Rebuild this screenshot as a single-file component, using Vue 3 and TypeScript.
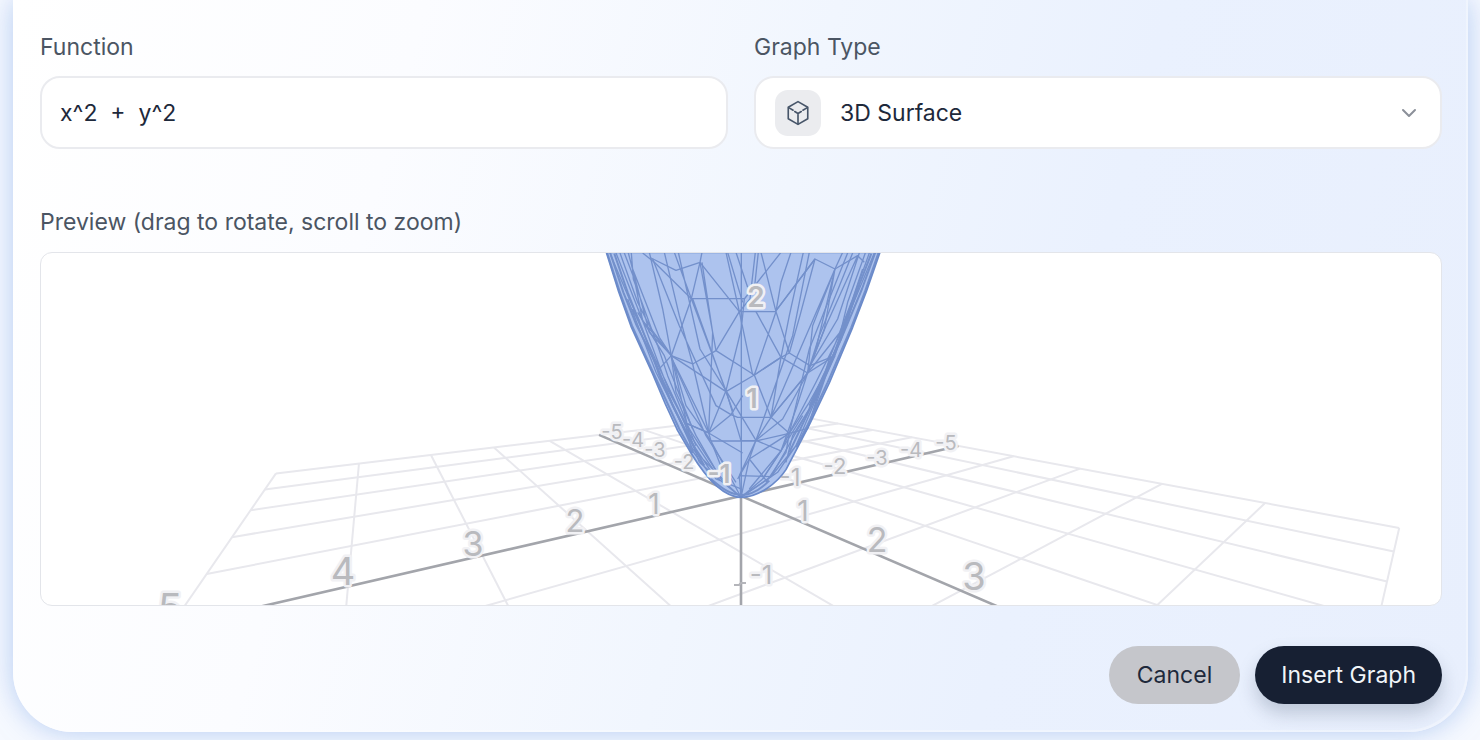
<script setup lang="ts">
import { computed, ref } from 'vue'

interface Mark {
  text: string
  x: number
  y: number
  size: number
}

interface Segment {
  x1: number
  y1: number
  x2: number
  y2: number
}

const expression = ref('x^2  +  y^2')
const graphType = ref('surface')

// Perspective projection of the ground plane, relative to the origin of the axes.
function project(u: number, v: number): [number, number] {
  const w = 1 - 0.0897 * u - 0.1241 * v
  return [(-63 * u + 46 * v) / w, (14.5 * u + 19.8 * v) / w]
}

function segment(u1: number, v1: number, u2: number, v2: number): Segment {
  const [x1, y1] = project(u1, v1)
  const [x2, y2] = project(u2, v2)
  return { x1, y1, x2, y2 }
}

const gridLines = computed<Segment[]>(() => {
  const lines: Segment[] = []
  for (let i = -5; i <= 5; i++) {
    if (i === 0) continue
    lines.push(segment(i, -5, i, i > 0 ? 4 : 5))
    lines.push(segment(-5, i, i > 0 ? 4 : 5, i))
  }
  return lines
})

const axes: Segment[] = [segment(-5, 0, 5, 0), segment(0, -5, 0, 4)]

const marks: Mark[] = [
  { text: '5', x: -571, y: 126, size: 40 },
  { text: '4', x: -398, y: 89, size: 38 },
  { text: '3', x: -268, y: 60, size: 34 },
  { text: '2', x: -166, y: 36, size: 31 },
  { text: '1', x: -87, y: 18, size: 28 },
  { text: '-5', x: -129, y: -57, size: 20 },
  { text: '-4', x: -108, y: -49, size: 20 },
  { text: '-3', x: -86, y: -39, size: 20 },
  { text: '-2', x: -57, y: -27, size: 20 },
  { text: '-1', x: 49, y: -10, size: 24 },
  { text: '-2', x: 94, y: -22, size: 22 },
  { text: '-3', x: 136, y: -31, size: 20 },
  { text: '-4', x: 170, y: -39, size: 20 },
  { text: '-5', x: 205, y: -46, size: 20 },
  { text: '1', x: 62, y: 25, size: 28 },
  { text: '2', x: 136, y: 56, size: 34 },
  { text: '3', x: 233, y: 94, size: 38 },
  { text: '-1', x: 20, y: 88, size: 26 },
]

const innerMarks: Mark[] = [
  { text: '2', x: 15, y: -189, size: 28 },
  { text: '1', x: 11, y: -88, size: 27 },
  { text: '-1', x: -22, y: -13, size: 26 },
]

// Surface mesh, in thirds of a unit.
const outline =
  'M31 10L68 128L105 232L170 375L208 465L245 545L285 612C320 670 375 745 436 745C490 745 545 700 570 662L605 595L640 528L700 402L770 235L812 125L852 10Z'

const wires = [
  'M165 27L240 64L312 40L318 10M140 12L175 40L286 149L312 40M286 149H445M312 40L430 188H538L657 30L717 60L785 20L805 40',
  'M286 149L226 320L290 345L360 305L430 188M360 305L475 378L555 325L580 312L642 350L717 320M555 325L635 372L717 320',
  'M226 320L185 365M286 149L390 425M290 149L412 490M226 320L390 428L475 378L555 325M226 326L338 552L405 497L440 440M390 425L338 552',
  'M405 497L425 505H525L635 372M390 425L435 575L480 574M345 576H480L580 553L635 538M475 378L525 505L580 553M390 425L480 574L555 606',
  'M525 505L480 574L430 680M345 576L338 552L268 522M338 552L440 612M480 574L460 630L515 700M580 553L460 630L425 690M555 606L500 690',
  'M390 10L430 188L470 378M395 10L440 160M312 40L360 305M318 40L350 250L338 552M420 10L455 115M555 10L445 150L436 240L390 425',
  'M436 10V745M487 10L475 120M478 10L462 150L430 188M495 10L540 188L475 378M540 188L580 312M480 188L555 325M585 10L555 100L540 188M657 30L538 188',
  'M235 10L286 149M247 10L312 300L390 425M205 10L250 200L290 345M170 30L250 230L360 470L405 497M160 10L200 180L226 320',
  'M622 10L580 200L555 325L525 505M657 30L612 200L580 312M640 10L590 260L480 574M717 60L650 230L635 372M717 60L600 330L525 505',
  'M290 345L338 552M268 522L370 680M345 576L390 690M280 555L310 640M430 680L525 683M430 680L435 745L500 690M375 690L435 745M460 630L435 745M345 576L435 745M525 683L435 745',
]

const rimWires = [
  'M60 12L140 215L226 320M72 12L125 160L165 240M85 12L115 90L140 215M97 12L160 250L226 320M45 20L100 150L130 215M110 60L190 265L226 320M106 12L112 90L185 290',
  'M140 215L205 390L268 522M125 190L205 320L290 540M165 240L226 320L280 555M110 180L180 335L268 522M95 150L180 370L245 500M185 290L215 380L300 590',
  'M226 320L240 430L300 560L375 690M226 320L270 470L345 576M185 365L268 522L338 552M185 365L235 480L300 600M205 390L280 555L370 690M226 326L330 560L420 700',
  'M268 522L285 600L345 680M245 500L290 600L400 710M300 600L360 690L435 720M310 640L380 700L435 745',
  'M820 12L760 180L717 320M808 12L755 160L717 320M790 12L725 210L642 350M785 20L690 230L642 350M770 12L670 260L635 372M755 12L640 300L580 553M835 12L740 240L700 350',
  'M740 10L717 60L660 300M800 60L740 240L635 372M790 110L720 300L640 470M770 150L700 330L635 538M760 200L660 400L580 553M717 60L685 240L635 372L525 505',
  'M717 320L690 380L635 538M717 320L640 460L580 553L555 606M700 350L660 450L600 590M635 372L560 510L480 574M642 350L600 480L555 606L500 690M690 380L640 480L525 683',
  'M665 440L590 560L570 640M635 538L600 590L525 683M580 553L570 610L510 700M620 500L555 606L460 720M600 590L545 670L435 745',
]

const rims = [
  'M33 10L70 125L108 230L175 378L250 540L290 612',
  'M42 10L82 130L120 225L180 345L228 465L275 560L325 650',
  'M55 14L95 130L150 270L200 405L270 550',
  'M848 10L808 125L766 235L695 400L635 528L600 595',
  'M838 10L798 120L750 235L680 400L625 515L580 610',
  'M826 14L785 120L735 270L680 385L640 480',
  'M345 690C380 720 405 738 436 738C470 738 495 720 520 695',
]
</script>

<template>
  <main class="stage">
    <form class="dialog" @submit.prevent>
      <div class="fields">
        <div class="field">
          <label for="expression">Function</label>
          <input id="expression" v-model="expression" class="control" type="text" spellcheck="false" />
        </div>
        <div class="field">
          <label for="graph-type">Graph Type</label>
          <div class="picker">
            <select id="graph-type" v-model="graphType" class="control">
              <option value="surface">3D Surface</option>
            </select>
            <span class="badge" aria-hidden="true">
              <svg viewBox="0 0 24 24" width="26" height="26">
                <path d="M12 1.5L21 6.7v10.6l-9 5.2-9-5.2V6.700z" />
                <path d="M3.400 7L7.500 9.400M16.500 9.400L20.600 7M12 22V12.500L9 10.600M12 12.500l3-1.900" />
              </svg>
            </span>
            <svg class="chevron" viewBox="0 0 16 10" width="16" height="10" aria-hidden="true">
              <path d="M2 2l6 6 6-6" />
            </svg>
          </div>
        </div>
      </div>

      <section class="preview">
        <h2>Preview (drag to rotate, scroll to zoom)</h2>
        <div class="canvas">
          <svg viewBox="-700 -243 1400 352" preserveAspectRatio="xMidYMid slice" role="img" aria-label="3D surface">
            <g class="grid">
              <line v-for="(l, i) in gridLines" :key="i" :x1="l.x1" :y1="l.y1" :x2="l.x2" :y2="l.y2" />
            </g>
            <g class="axis">
              <line v-for="(l, i) in axes" :key="i" :x1="l.x1" :y1="l.y1" :x2="l.x2" :y2="l.y2" />
              <line x1="0" y1="0" x2="0" y2="112" />
              <path class="tick" d="M-7 89h5l2-2h5" />
            </g>
            <g class="marks">
              <text v-for="(m, i) in marks" :key="i" :x="m.x" :y="m.y" :font-size="m.size">{{ m.text }}</text>
            </g>
            <g transform="translate(-145 -247) scale(0.3333)">
              <path class="surface" :d="outline" />
              <path v-for="(d, i) in wires" :key="'w' + i" class="wire" :d="d" />
              <path v-for="(d, i) in rimWires" :key="'r' + i" class="wire" :d="d" />
              <path v-for="(d, i) in rims" :key="'e' + i" class="rim" :d="d" />
              <path class="edge" :d="outline" />
            </g>
            <g class="marks inner">
              <text v-for="(m, i) in innerMarks" :key="i" :x="m.x" :y="m.y" :font-size="m.size">{{ m.text }}</text>
            </g>
          </svg>
        </div>
      </section>

      <div class="actions">
        <button type="button" class="cancel">Cancel</button>
        <button type="submit" class="insert">Insert Graph</button>
      </div>
    </form>
  </main>
</template>

<style>
body {
  margin: 0;
  background: #f6f9ff;
}
</style>

<style scoped>
.stage {
  box-sizing: border-box;
  padding: 0 12px 8px 13px;
  overflow: hidden;
  font-family: Inter, 'Liberation Sans', sans-serif;
  font-size: 23px;
  line-height: 30px;
  color: #1e293b;
}

.dialog {
  box-sizing: border-box;
  padding: 32px 26px 28px 27px;
  border-radius: 0 0 60px 60px;
  background: linear-gradient(105deg, #ffffff 0%, #fbfcff 25%, #f1f6fe 50%, #eaf1fe 70%, #e8effd 100%);
  box-shadow: 0 0 28px rgba(125, 165, 230, 0.55), inset -2px -2px 1px rgba(255, 255, 255, 0.35);
}

.fields {
  display: grid;
  grid-template-columns: 1fr 1fr;
  gap: 26px;
}

.field {
  display: flex;
  flex-direction: column;
  gap: 14px;
}

label,
h2 {
  margin: 0;
  font-size: 23px;
  font-weight: 400;
  color: #4b5563;
}

.control {
  box-sizing: border-box;
  width: 100%;
  height: 73px;
  padding: 0 18px;
  border: 2px solid #eaebef;
  border-radius: 20px;
  background: #ffffff;
  color: #1e293b;
  font: inherit;
  outline: none;
}

.picker {
  position: relative;
}

.picker .control {
  display: block;
  appearance: none;
  padding-left: 84px;
}

.badge {
  position: absolute;
  left: 21px;
  top: 50%;
  display: grid;
  place-items: center;
  width: 46px;
  height: 46px;
  border-radius: 13px;
  background: #ebecef;
  transform: translateY(-50%);
  pointer-events: none;
}

.badge svg,
.chevron {
  fill: none;
  stroke: #475569;
  stroke-width: 1.5;
  stroke-linecap: round;
  stroke-linejoin: round;
}

.chevron {
  position: absolute;
  right: 25px;
  top: 50%;
  stroke: #8b9099;
  stroke-width: 2;
  transform: translateY(-50%);
  pointer-events: none;
}

.preview {
  display: flex;
  flex-direction: column;
  gap: 15px;
  margin-top: 58px;
}

.canvas {
  border: 1px solid #e3e5ea;
  border-radius: 12px;
  overflow: hidden;
  background: #ffffff;
}

.canvas svg {
  display: block;
  width: 100%;
  height: auto;
}

.grid line {
  stroke: #e8e8ed;
  stroke-width: 2;
}

.axis line {
  stroke: #a3a5ab;
  stroke-width: 2.6;
}

.tick {
  fill: none;
  stroke: #b4b5ba;
  stroke-width: 2;
}

.marks text {
  fill: #b9babe;
  stroke: #f1f1f4;
  stroke-width: 5;
  stroke-linejoin: round;
  paint-order: stroke;
  text-anchor: middle;
  font-family: Inter, 'Liberation Sans', sans-serif;
  font-weight: 400;
}

.marks.inner text {
  font-weight: 600;
}

.surface {
  fill: #adc3ee;
}

.wire,
.rim,
.edge {
  fill: none;
  stroke: #7390cb;
  stroke-width: 4;
  stroke-linejoin: round;
}

.rim {
  stroke-width: 6;
}

.edge {
  stroke: #6a8aca;
  stroke-width: 5;
}

.actions {
  display: flex;
  justify-content: flex-end;
  gap: 15px;
  margin-top: 40px;
}

.actions button {
  height: 58px;
  padding: 0 28px;
  border: 0;
  border-radius: 29px;
  font: inherit;
  cursor: pointer;
}

.actions .cancel {
  background: #c5c6cb;
  color: #1e293b;
}

.actions .insert {
  padding: 0 26px;
  background: #172033;
  color: #f1f5f9;
  box-shadow: 0 10px 18px rgba(100, 116, 139, 0.32);
}
</style>
